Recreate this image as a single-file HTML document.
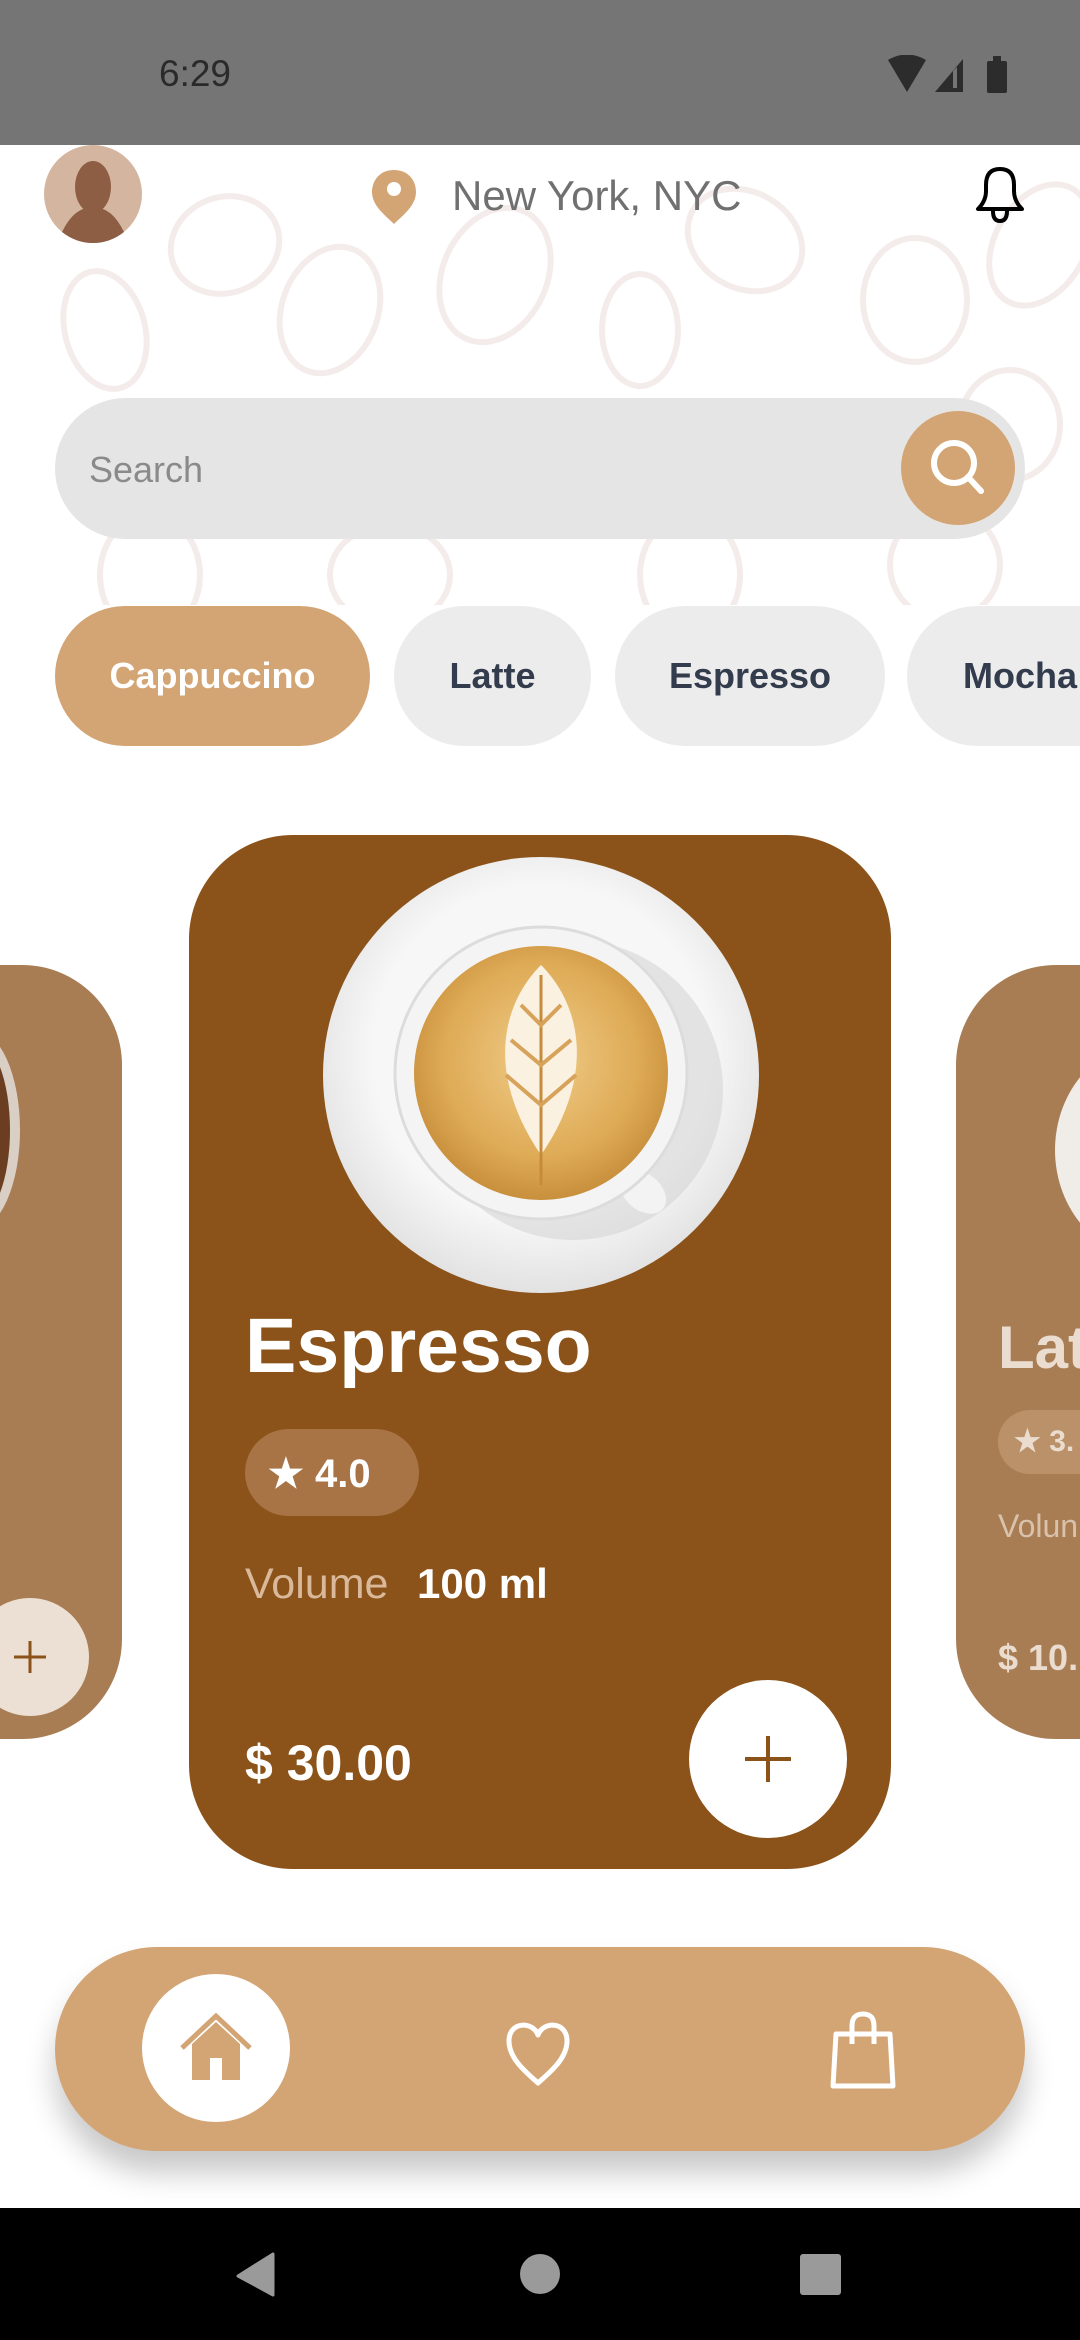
<!DOCTYPE html>
<html><head><meta charset="utf-8">
<style>
*{margin:0;padding:0;box-sizing:border-box}
body{width:1080px;height:2340px;position:relative;overflow:hidden;background:#fff;font-family:"Liberation Sans",sans-serif}
.a{position:absolute}
.chip{position:absolute;top:606px;height:140px;border-radius:70px;background:#ececec;color:#323c4d;font-size:36px;font-weight:bold;display:flex;align-items:center;justify-content:center}
</style></head><body>
<!-- bean background -->
<svg class="a" style="left:0;top:145px" width="1080" height="460">
<g fill="none" stroke="#f4ecea" stroke-width="6">
<ellipse cx="225" cy="100" rx="55" ry="48" transform="rotate(-20 225 100)"/>
<ellipse cx="105" cy="185" rx="40" ry="60" transform="rotate(-15 105 185)"/>
<ellipse cx="330" cy="165" rx="48" ry="65" transform="rotate(20 330 165)"/>
<ellipse cx="495" cy="130" rx="52" ry="70" transform="rotate(25 495 130)"/>
<ellipse cx="640" cy="185" rx="38" ry="56"/>
<ellipse cx="745" cy="95" rx="60" ry="48" transform="rotate(30 745 95)"/>
<ellipse cx="915" cy="155" rx="52" ry="62"/>
<ellipse cx="1040" cy="100" rx="45" ry="65" transform="rotate(30 1040 100)"/>
<ellipse cx="150" cy="430" rx="50" ry="60"/>
<ellipse cx="390" cy="430" rx="60" ry="50"/>
<ellipse cx="690" cy="430" rx="50" ry="60"/>
<ellipse cx="945" cy="420" rx="55" ry="55"/>
<ellipse cx="1010" cy="280" rx="50" ry="55"/>
</g></svg>
<!-- status bar -->
<div class="a" style="left:0;top:0;width:1080px;height:145px;background:#757575"></div>
<div class="a" style="left:159px;top:53px;font-size:37px;color:#2a2a2a">6:29</div>
<svg class="a" style="left:885px;top:55px" width="125" height="40">
<path d="M3 5 Q22 -6 41 5 L22 37Z" fill="#2c2c2c"/>
<path d="M50 37 L78 4 L78 37Z" fill="#2c2c2c"/><path d="M68 16 L72 12 L72 33 L68 33Z" fill="#757575"/>
<rect x="102" y="6" width="20" height="32" rx="2" fill="#2c2c2c"/><rect x="108" y="1" width="8" height="6" fill="#2c2c2c"/>
</svg>
<!-- header -->
<svg class="a" style="left:44px;top:145px" width="100" height="98">
<circle cx="49" cy="49" r="49" fill="#d4b5a0"/>
<ellipse cx="49" cy="42" rx="18" ry="26" fill="#8d5e43"/>
<path d="M18 87 Q30 62 49 62 Q68 62 80 87 Q66 98 49 98 Q32 98 18 87Z" fill="#8d5e43"/>
</svg>
<svg class="a" style="left:370px;top:168px" width="48" height="58"><path d="M24 2 C10 2 2 12 2 24 C2 38 16 48 24 56 C32 48 46 38 46 24 C46 12 38 2 24 2Z" fill="#d4a574"/><circle cx="24" cy="21" r="7" fill="#fff"/></svg>
<div class="a" style="left:452px;top:172px;font-size:42px;color:#707070">New York, NYC</div>
<svg class="a" style="left:970px;top:163px" width="60" height="62"><path d="M8 46 L52 46 Q44 38 44 28 L44 22 Q44 6 30 6 Q16 6 16 22 L16 28 Q16 38 8 46Z M23 48 Q23 58 30 58 Q37 58 37 48" fill="none" stroke="#000" stroke-width="4" stroke-linejoin="round"/></svg>
<!-- search -->
<div class="a" style="left:55px;top:398px;width:970px;height:141px;border-radius:71px;background:#e5e5e5"></div>
<div class="a" style="left:89px;top:449px;font-size:36px;color:#8a8a8a">Search</div>
<svg class="a" style="left:901px;top:411px" width="114" height="114"><circle cx="57" cy="57" r="57" fill="#d4a574"/><circle cx="53" cy="52" r="20" fill="none" stroke="#fff" stroke-width="6"/><path d="M67 66 L80 80" stroke="#fff" stroke-width="6" stroke-linecap="round"/></svg>
<!-- chips -->
<div class="chip" style="left:55px;width:315px;background:#d4a574;color:#fff">Cappuccino</div>
<div class="chip" style="left:394px;width:197px">Latte</div>
<div class="chip" style="left:615px;width:270px">Espresso</div>
<div class="chip" style="left:907px;width:240px;justify-content:flex-start;padding-left:56px">Mocha</div>
<!-- side cards -->
<div class="a" style="left:-200px;top:965px;width:322px;height:774px;border-radius:100px;background:#a97d54"></div>
<div class="a" style="left:-70px;top:1030px;width:90px;height:200px;border-radius:50%;border:10px solid #d9cfc5;background:#6b3e22"></div>
<div class="a" style="left:-29px;top:1598px;width:118px;height:118px;border-radius:50%;background:#ecdfd3"></div>
<svg class="a" style="left:10px;top:1637px" width="40" height="40"><path d="M20 4 V36 M4 20 H36" stroke="#8b5319" stroke-width="3"/></svg>
<div class="a" style="left:956px;top:965px;width:322px;height:774px;border-radius:100px;background:#a97d54"></div>
<div class="a" style="left:1055px;top:1040px;width:200px;height:220px;border-radius:50%;background:#f0ece8"></div>
<div class="a" style="left:998px;top:1313px;font-size:60px;font-weight:bold;color:#eaddd0">Lat</div>
<div class="a" style="left:998px;top:1410px;width:120px;height:64px;border-radius:32px;background:#bb9169"></div>
<div class="a" style="left:1014px;top:1424px;font-size:30px;font-weight:bold;color:#eaddd0">★ 3.</div>
<div class="a" style="left:998px;top:1508px;font-size:32px;color:#d9c2ab">Volun</div>
<div class="a" style="left:998px;top:1637px;font-size:36px;font-weight:bold;color:#eaddd0">$ 10.</div>
<!-- main card -->
<div class="a" style="left:189px;top:835px;width:702px;height:1034px;border-radius:104px;background:#8b5319"></div>
<svg class="a" style="left:321px;top:855px" width="440" height="440">
<defs><radialGradient id="p" cx="50%" cy="45%" r="55%"><stop offset="0.7" stop-color="#f7f7f7"/><stop offset="1" stop-color="#e2e2e2"/></radialGradient>
<radialGradient id="c" cx="50%" cy="45%" r="55%"><stop offset="0" stop-color="#f0cd8a"/><stop offset="0.7" stop-color="#deaa55"/><stop offset="1" stop-color="#c88f3c"/></radialGradient></defs>
<circle cx="220" cy="220" r="218" fill="url(#p)"/>
<ellipse cx="252" cy="235" rx="150" ry="150" fill="#cfcfcf" opacity="0.5"/>
<ellipse cx="322" cy="337" rx="26" ry="18" transform="rotate(40 322 337)" fill="#f3f3f3"/>
<circle cx="220" cy="218" r="146" fill="#f4f4f4" stroke="#dcdcdc" stroke-width="3"/>
<circle cx="220" cy="218" r="127" fill="url(#c)"/>
<path d="M220 110 C180 150 165 220 220 300 C275 220 260 150 220 110Z" fill="#fbf1e0"/>
<path d="M220 120 V330" stroke="#c68b3a" stroke-width="3"/>
<path d="M200 150 L220 170 L240 150 M190 185 L220 210 L250 185 M185 220 L220 250 L255 220" stroke="#d7a25a" stroke-width="4" fill="none"/>
</svg>
<div class="a" style="left:245px;top:1302px;font-size:77px;font-weight:bold;color:#fff">Espresso</div>
<div class="a" style="left:245px;top:1429px;width:174px;height:87px;border-radius:44px;background:#a87445"></div>
<div class="a" style="left:268px;top:1451px;font-size:40px;color:#fff;font-weight:bold">★ 4.0</div>
<div class="a" style="left:245px;top:1560px;font-size:43px;color:#d9b99a">Volume</div>
<div class="a" style="left:417px;top:1560px;font-size:42px;color:#fff;font-weight:bold">100 ml</div>
<div class="a" style="left:245px;top:1734px;font-size:50px;color:#fff;font-weight:bold">$ 30.00</div>
<div class="a" style="left:689px;top:1680px;width:158px;height:158px;border-radius:50%;background:#fff"></div>
<svg class="a" style="left:743px;top:1734px" width="50" height="50"><path d="M25 2 V48 M2 25 H48" stroke="#8b5319" stroke-width="4"/></svg>
<!-- bottom nav -->
<div class="a" style="left:55px;top:1947px;width:970px;height:204px;border-radius:102px;background:#d4a574;box-shadow:0 22px 30px rgba(0,0,0,0.22)"></div>
<div class="a" style="left:142px;top:1974px;width:148px;height:148px;border-radius:50%;background:#fff"></div>
<svg class="a" style="left:178px;top:2010px" width="76" height="76"><path d="M4 38 L38 6 L72 38" fill="none" stroke="#d4a574" stroke-width="5"/><path d="M14 34 L38 12 L62 34 V70 H44 V48 H32 V70 H14Z" fill="#d4a574"/></svg>
<svg class="a" style="left:503px;top:2017px" width="70" height="70"><path d="M35 18 C30 4 6 4 6 24 C6 42 24 56 35 66 C46 56 64 42 64 24 C64 4 40 4 35 18Z" fill="none" stroke="#fff" stroke-width="5" stroke-linejoin="round"/></svg>
<svg class="a" style="left:826px;top:2010px" width="74" height="80"><path d="M10 24 H64 L67 76 H7Z" fill="none" stroke="#fff" stroke-width="5" stroke-linejoin="round"/><path d="M26 34 V16 Q26 4 37 4 Q48 4 48 16 V34" fill="none" stroke="#fff" stroke-width="5"/></svg>
<!-- android nav -->
<div class="a" style="left:0;top:2208px;width:1080px;height:132px;background:#000"></div>
<svg class="a" style="left:0;top:2240px" width="1080" height="70">
<path d="M273 14 L273 55 L238 36 Z" fill="#9a9a9a" stroke="#9a9a9a" stroke-width="3" stroke-linejoin="round"/>
<circle cx="540" cy="34" r="20" fill="#9a9a9a"/>
<rect x="800" y="14" width="41" height="41" rx="3" fill="#9a9a9a"/>
</svg>
</body></html>
